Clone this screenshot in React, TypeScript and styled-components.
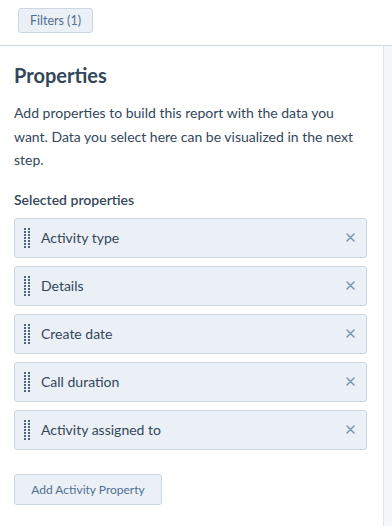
import styled, { createGlobalStyle } from "styled-components";

const GlobalStyle = createGlobalStyle`
  html, body {
    margin: 0;
    padding: 0;
    background: #ffffff;
  }
  body {
    font-family: Lato, "Noto Sans", sans-serif;
    color: #33475b;
    -webkit-font-smoothing: antialiased;
  }
`;

const Page = styled.div`
  width: 392px;
  height: 526px;
  display: flex;
  flex-direction: column;
  overflow: hidden;
`;

const TopBar = styled.div`
  height: 45px;
  border-bottom: 1px solid #cbd6e2;
  padding-left: 18px;
  display: flex;
  align-items: flex-start;
`;

const SmallButton = styled.button`
  font-family: inherit;
  font-size: 12px;
  color: #516f90;
  background: #eaf0f6;
  border: 1px solid #cbd6e2;
  border-radius: 3px;
  cursor: pointer;
  display: inline-flex;
  align-items: center;
  justify-content: center;
  box-sizing: border-box;
`;

const FilterButton = styled(SmallButton)`
  margin-top: 8px;
  width: 75px;
  height: 25px;
  padding: 0;
  font-size: 12.5px;
`;

const Body = styled.div`
  flex: 1;
  display: flex;
`;

const Panel = styled.section`
  flex: 1;
  padding: 14px 16px 0 14px;
  display: flex;
  flex-direction: column;
`;

const Gutter = styled.div`
  width: 8px;
  background: #f5f8fa;
  border-left: 1px solid #dfe3eb;
`;

const Title = styled.h2`
  margin: 0;
  font-size: 20px;
  line-height: 30px;
  font-weight: 700;
  color: #33475b;
`;

const Intro = styled.p`
  margin: 11px 0 0;
  font-size: 14px;
  line-height: 23.5px;
  color: #33475b;
`;

const SectionLabel = styled.h3`
  margin: 17px 0 0;
  font-size: 14px;
  line-height: 22px;
  font-weight: 600;
  color: #33475b;
`;

const List = styled.ul`
  list-style: none;
  margin: 7px 0 0;
  padding: 0;
  display: flex;
  flex-direction: column;
  gap: 8px;
`;

const Row = styled.li`
  height: 40px;
  box-sizing: border-box;
  display: flex;
  align-items: center;
  background: #eaf0f6;
  border: 1px solid #cbd6e2;
  border-radius: 3px;
  padding: 0 9px 0 9px;
`;

const HandleBox = styled.span`
  display: flex;
  flex-shrink: 0;
`;

const RowLabel = styled.span`
  flex: 1;
  margin-left: 11px;
  font-size: 14px;
  color: #33475b;
`;

const RemoveButton = styled.button`
  border: 0;
  background: transparent;
  padding: 0;
  width: 14px;
  height: 14px;
  display: flex;
  align-items: center;
  justify-content: center;
  cursor: pointer;
`;

const AddButton = styled(SmallButton)`
  align-self: flex-start;
  margin-top: 24px;
  width: 148px;
  height: 31px;
  font-size: 12px;
`;

const properties = [
  "Activity type",
  "Details",
  "Create date",
  "Call duration",
  "Activity assigned to",
];

function DragHandle() {
  const dots = [];
  for (let r = 0; r < 7; r++) {
    for (let c = 0; c < 2; c++) {
      dots.push(
        <rect key={`${r}-${c}`} x={c * 4} y={r * 3} width="2" height="2" />
      );
    }
  }
  return (
    <HandleBox>
      <svg
        width="6"
        height="20"
        viewBox="0 0 6 20"
        fill="#4a6482"
        shapeRendering="crispEdges"
        aria-hidden
      >
        {dots}
      </svg>
    </HandleBox>
  );
}

function CloseIcon() {
  return (
    <svg width="9" height="9" viewBox="0 0 9 9" aria-hidden>
      <path
        d="M1 1L8 8M8 1L1 8"
        stroke="#7c98b6"
        strokeWidth="1.6"
        strokeLinecap="round"
      />
    </svg>
  );
}

export default function App() {
  return (
    <>
      <GlobalStyle />
      <Page>
        <TopBar>
          <FilterButton>Filters (1)</FilterButton>
        </TopBar>
        <Body>
          <Panel>
            <Title>Properties</Title>
            <Intro>
              Add properties to build this report with the data you want. Data
              you select here can be visualized in the next step.
            </Intro>
            <SectionLabel>Selected properties</SectionLabel>
            <List>
              {properties.map((p) => (
                <Row key={p}>
                  <DragHandle />
                  <RowLabel>{p}</RowLabel>
                  <RemoveButton aria-label={`Remove ${p}`}>
                    <CloseIcon />
                  </RemoveButton>
                </Row>
              ))}
            </List>
            <AddButton>Add Activity Property</AddButton>
          </Panel>
          <Gutter />
        </Body>
      </Page>
    </>
  );
}
